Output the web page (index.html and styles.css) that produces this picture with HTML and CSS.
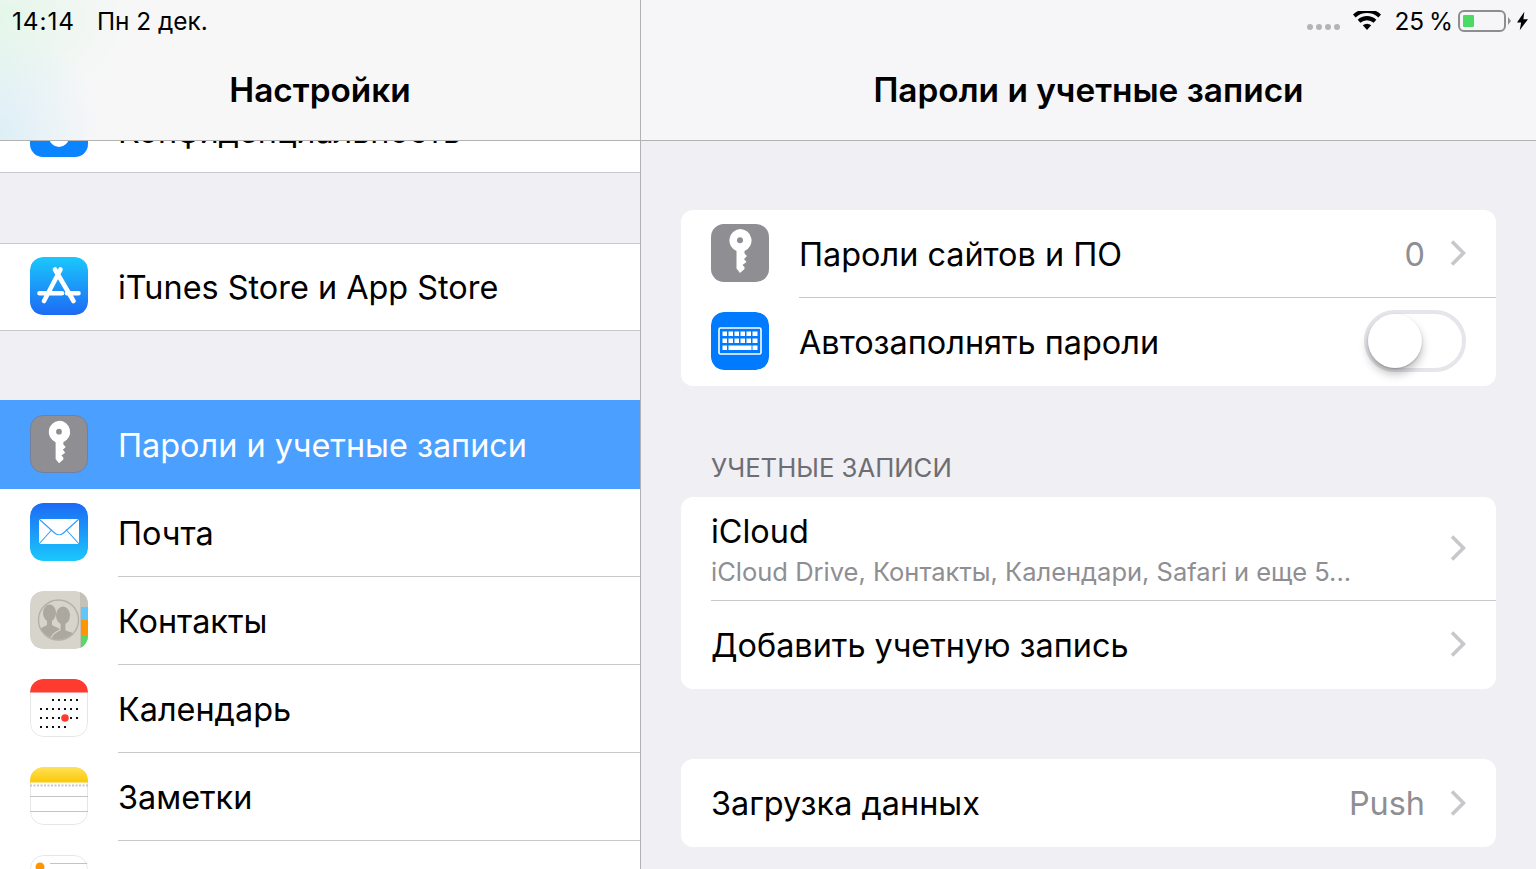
FILE: index.html
```html
<!DOCTYPE html>
<html lang="ru">
<head>
    <meta charset="UTF-8">
    <meta name="viewport" content="width=device-width, initial-scale=1.0">
    <title>Настройки</title>
    <link rel="stylesheet" href="styles.css">
</head>
<body>
    <svg class="defs" width="0" height="0">
        <symbol id="key" viewBox="0 0 58 58">
            <path fill-rule="evenodd" fill="#fff" d="M29 5a11.500 11.500 0 0 1 4.500 22.100V29.500L36 32l-3 3 2.500 3-4 3 2 2v2L29 49l-3.500-4.500V27.100A11.500 11.500 0 0 1 29 5zm0 8.200a3 3 0 1 0 0 6 3 3 0 0 0 0-6z"/>
        </symbol>
        <symbol id="chev" viewBox="0 0 18 28">
            <path d="M4 2.500 15.500 14 4 25.500" fill="none" stroke="#c7c7cc" stroke-width="3.600"/>
        </symbol>
    </svg>

    <aside class="sidebar">
        <header class="navbar navbar-tint">
            <div class="status">
                <span class="status-time">14:14</span>
                <span class="status-date">Пн 2 дек.</span>
            </div>
            <h1>Настройки</h1>
        </header>

        <div class="cut-row">
            <div class="row">
                <span class="icon icon-blue"><i class="hand"></i></span>
                <span class="label">Конфиденциальность</span>
            </div>
        </div>

        <div class="group">
            <div class="row row-short">
                <svg class="icon" viewBox="0 0 58 58">
                    <defs>
                        <linearGradient id="storeBg" x1="0" y1="0" x2="0" y2="1">
                            <stop offset="0" stop-color="#1ac8fc"/>
                            <stop offset="1" stop-color="#1d6af5"/>
                        </linearGradient>
                    </defs>
                    <rect width="58" height="58" rx="13" fill="url(#storeBg)"/>
                    <path d="M30.500 12.500 14 44M25 12.500 43.500 44M9.500 36.300H32M37 36.300H48.500" stroke="#fff" stroke-width="4.600" stroke-linecap="round" fill="none"/>
                </svg>
                <span class="label">iTunes Store и App Store</span>
            </div>
        </div>

        <div class="group group-list">
            <div class="row row-active">
                <svg class="icon icon-gray"><use href="#key"/></svg>
                <span class="label">Пароли и учетные записи</span>
            </div>
            <div class="row row-line">
                <svg class="icon" viewBox="0 0 58 58">
                    <defs>
                        <linearGradient id="mailBg" x1="0" y1="0" x2="0" y2="1">
                            <stop offset="0" stop-color="#1d6af5"/>
                            <stop offset="1" stop-color="#1ac8fc"/>
                        </linearGradient>
                    </defs>
                    <rect width="58" height="58" rx="13" fill="url(#mailBg)"/>
                    <rect x="9" y="16" width="40" height="25" rx="1" fill="#fff"/>
                    <path d="M9 16 24 29.500C27 32.500 31 32.500 34 29.500L49 16M9 41 22 26.500M49 41 36 26.500" stroke="#2f9cf8" stroke-width="1.100" fill="none"/>
                </svg>
                <span class="label">Почта</span>
            </div>
            <div class="row row-line">
                <svg class="icon" viewBox="0 0 58 58">
                    <defs>
                        <clipPath id="peopleClip">
                            <circle cx="28.500" cy="29" r="19.500"/>
                        </clipPath>
                    </defs>
                    <rect width="58" height="58" rx="13" fill="#d7d4cb"/>
                    <path d="M51 0v16h7v-3A13 13 0 0 0 51 0z" fill="#c4c1b8"/>
                    <rect x="51" y="16" width="7" height="13" fill="#62c6fa"/>
                    <rect x="51" y="29" width="7" height="15" fill="#ff9500"/>
                    <path d="M51 44h7v1a13 13 0 0 1-7 13z" fill="#5ad568"/>
                    <circle cx="28.500" cy="29" r="20" fill="none" stroke="#b5b0a7" stroke-width="1.400"/>
                    <g clip-path="url(#peopleClip)" fill="#aca79f">
                        <ellipse cx="19.500" cy="22" rx="6.500" ry="8.500"/>
                        <path d="M6 42C9 37 14 36 17 34V26h5v8C25 36 28 36 31 39L22 50H6z"/>
                        <path d="M20 52C21 43 26 41 30 39V32h6v7C40 41 46 41 50 45V52z" stroke="#d7d4cb" stroke-width="1.200"/>
                        <ellipse cx="33" cy="24.500" rx="7" ry="9"/>
                    </g>
                    <rect x="50" y="0" width="1" height="58" fill="#c4c1b8"/>
                </svg>
                <span class="label">Контакты</span>
            </div>
            <div class="row row-line">
                <svg class="icon" viewBox="0 0 58 58">
                    <rect x=".5" y=".5" width="57" height="57" rx="13" fill="#fff" stroke="#e6e6e6"/>
                    <path d="M0 13.500V13A13 13 0 0 1 13 0h32a13 13 0 0 1 13 13v.5z" fill="#ff3b30"/>
                    <path d="M22 21H48M10 30H48M10 39H48M10 48H36" stroke="#111" stroke-width="2" stroke-dasharray="2 4" fill="none"/>
                    <circle cx="35" cy="39" r="3.800" fill="#ff3b30"/>
                </svg>
                <span class="label">Календарь</span>
            </div>
            <div class="row row-line">
                <svg class="icon" viewBox="0 0 58 58">
                    <defs>
                        <linearGradient id="noteBg" x1="0" y1="0" x2="0" y2="1">
                            <stop offset="0" stop-color="#ffe15b"/>
                            <stop offset="1" stop-color="#fec705"/>
                        </linearGradient>
                    </defs>
                    <rect x=".5" y=".5" width="57" height="57" rx="13" fill="#fff" stroke="#e6e6e6"/>
                    <path d="M0 15.500V13A13 13 0 0 1 13 0h32a13 13 0 0 1 13 13v2.500z" fill="url(#noteBg)"/>
                    <path d="M0 18.500H58" stroke="#c8c8c8" stroke-width="2" stroke-dasharray="2 1.500"/>
                    <path d="M0 29.500H58M0 44.500H58" stroke="#c4c4c4" stroke-width="1"/>
                </svg>
                <span class="label">Заметки</span>
            </div>
            <div class="row">
                <svg class="icon" viewBox="0 0 58 58">
                    <rect x=".5" y=".5" width="57" height="57" rx="13" fill="#fff" stroke="#e6e6e6"/>
                    <path d="M20 8.500H58" stroke="#c4c4c4"/>
                    <circle cx="10" cy="12" r="4.500" fill="#ff9500"/>
                </svg>
            </div>
        </div>
    </aside>

    <main class="detail">
        <header class="navbar">
            <div class="status status-right">
                <span class="dots"><i></i><i></i><i></i><i></i></span>
                <svg class="wifi" viewBox="0 0 28 20">
                    <path d="M14 19 9.800 14.300a6.200 6.200 0 0 1 8.400 0zM7.400 11.700 4.700 8.700a13.800 13.800 0 0 1 18.600 0l-2.700 3a9.800 9.800 0 0 0-13.200 0zM2.600 6.400 0 3.500a20.600 20.600 0 0 1 28 0l-2.600 2.900a16.800 16.800 0 0 0-22.800 0z" fill="#000"/>
                </svg>
                <span class="battery-pct">25 %</span>
                <span class="battery"><i></i></span>
                <span class="battery-tip"></span>
                <svg class="bolt" viewBox="0 0 12 20">
                    <path d="M8 0 0 11.500h4.500L3 20l9-12H7z" fill="#000"/>
                </svg>
            </div>
            <h1>Пароли и учетные записи</h1>
        </header>

        <div class="content">
            <section class="card">
                <div class="card-row">
                    <svg class="icon icon-gray-flat"><use href="#key"/></svg>
                    <div class="cell cell-line">
                        <span class="label">Пароли сайтов и ПО</span>
                        <span class="value">0</span>
                        <svg class="chev"><use href="#chev"/></svg>
                    </div>
                </div>
                <div class="card-row">
                    <svg class="icon" viewBox="0 0 58 58">
                        <rect width="58" height="58" rx="13" fill="#007aff"/>
                        <rect x="8" y="16" width="42" height="26" rx="1.500" fill="none" stroke="#fff" stroke-width="1.600"/>
                        <g fill="#fff">
                            <path d="M11.500 19.500h4.500v4.500h-4.500zM17.500 19.500h4.500v4.500h-4.500zM23.500 19.500h4.500v4.500h-4.500zM29.500 19.500h4.500v4.500h-4.500zM35.500 19.500h4.500v4.500h-4.500zM41.500 19.500h5v4.500h-5z"/>
                            <path d="M11.500 26.500h4.500v4.500h-4.500zM17.500 26.500h4.500v4.500h-4.500zM23.500 26.500h4.500v4.500h-4.500zM29.500 26.500h4.500v4.500h-4.500zM35.500 26.500h4.500v4.500h-4.500zM41.500 26.500h5v4.500h-5z"/>
                            <path d="M11.500 33.500h4.500v4.500h-4.500zM17.500 33.500h23v4.500h-23zM41.500 33.500h5v4.500h-5z"/>
                        </g>
                    </svg>
                    <div class="cell">
                        <span class="label">Автозаполнять пароли</span>
                        <span class="toggle"><i></i></span>
                    </div>
                </div>
            </section>

            <h2 class="section-title">УЧЕТНЫЕ ЗАПИСИ</h2>

            <section class="card">
                <div class="card-row card-row-tall">
                    <div class="cell cell-line cell-flush">
                        <div class="stack">
                            <span class="label">iCloud</span>
                            <span class="sublabel">iCloud Drive, Контакты, Календари, Safari и еще 5...</span>
                        </div>
                        <svg class="chev"><use href="#chev"/></svg>
                    </div>
                </div>
                <div class="card-row">
                    <div class="cell cell-flush">
                        <span class="label">Добавить учетную запись</span>
                        <svg class="chev"><use href="#chev"/></svg>
                    </div>
                </div>
            </section>

            <section class="card card-last">
                <div class="card-row">
                    <div class="cell cell-flush">
                        <span class="label">Загрузка данных</span>
                        <span class="value">Push</span>
                        <svg class="chev"><use href="#chev"/></svg>
                    </div>
                </div>
            </section>
        </div>
    </main>
</body>
</html>
```

FILE: styles.css
```css
* {
    box-sizing: border-box;
}

body {
    margin: 0;
    height: 100vh;
    overflow: hidden;
    display: flex;
    background: #efeff4;
    color: #000;
    font-family: Inter, Roboto, sans-serif;
}

.defs {
    display: block;
    width: 0;
    height: 0;
}

/* nav bars */
.navbar {
    height: 141px;
    flex: none;
    background: #f6f6f8;
    border-bottom: 1px solid #b2b2b2;
    padding-top: 9px;
}

.navbar-tint {
    background:
        radial-gradient(circle at 0 130px, rgba(190, 228, 245, 0.45), rgba(190, 228, 245, 0) 100px),
        radial-gradient(ellipse 130px 90px at 0 20px, rgba(205, 245, 215, 0.45), rgba(205, 245, 215, 0) 100%),
        #f7f7f8;
}

.navbar h1 {
    margin: 37px 0 0;
    font-size: 33.4px;
    line-height: 40px;
    font-weight: 600;
    text-align: center;
}

.status {
    display: flex;
    align-items: center;
    height: 24px;
    padding-left: 12px;
    font-size: 24.4px;
    line-height: 24px;
}

.status-time {
    letter-spacing: 0.9px;
}

.status-date {
    margin-left: 22px;
}

.status-right {
    justify-content: flex-end;
    padding: 0 8px 0 0;
}

.dots {
    display: flex;
    gap: 3px;
    margin: 11px 13px 0 0;
}

.dots i {
    width: 6px;
    height: 6px;
    border-radius: 50%;
    background: #b4b4b6;
}

.wifi {
    width: 28px;
    height: 20px;
    margin: 0 13px 0 0;
}

.battery-pct {
    margin-right: 5px;
    word-spacing: -2px;
}

.battery {
    width: 48px;
    height: 22px;
    padding: 3px;
    border: 2px solid #8e8e90;
    border-radius: 6px;
}

.battery i {
    display: block;
    width: 11px;
    height: 100%;
    background: #4cd964;
    border-radius: 1px;
}

.battery-tip {
    width: 0;
    height: 0;
    margin: 0 6px 0 2px;
    border-left: 3px solid #8e8e90;
    border-top: 4px solid transparent;
    border-bottom: 4px solid transparent;
}

.bolt {
    width: 11px;
    height: 20px;
}

/* left column */
.sidebar {
    width: 641px;
    flex: none;
    display: flex;
    flex-direction: column;
    overflow: hidden;
    border-right: 1px solid #b2b2b2;
}

.row {
    height: 88px;
    flex: none;
    display: flex;
    align-items: center;
    gap: 30px;
    padding-left: 30px;
    background: #fff;
    position: relative;
}

.row .icon {
    margin-top: -2px;
}

.row-short {
    height: 86px;
}

.cut-row {
    height: 32px;
    flex: none;
    display: flex;
    align-items: flex-end;
    overflow: hidden;
    background: #fff;
    border-bottom: 1px solid #c8c7cc;
}

.cut-row .row {
    width: 100%;
    margin-bottom: -1px;
}

.cut-row .label {
    margin-top: 3px;
}

.group {
    margin-top: 70px;
    border-top: 1px solid #c8c7cc;
    border-bottom: 1px solid #c8c7cc;
}

.group-list {
    margin-top: 69px;
    border: none;
}

.row-line::after {
    content: "";
    position: absolute;
    left: 118px;
    right: 0;
    bottom: 0;
    border-bottom: 1px solid #c8c7cc;
}

.row-active {
    height: 89px;
    background: #4a9fff;
    color: #fff;
}

.label {
    font-size: 32.4px;
    line-height: 40px;
    padding-top: 2px;
    white-space: nowrap;
}

.icon {
    width: 58px;
    height: 58px;
    flex: none;
    display: block;
    border-radius: 13px;
}

.icon-gray {
    background: #8e8e93;
    border: 1px solid #7280a0;
}

.icon-gray-flat {
    background: #8e8e93;
}

.icon-blue {
    background: #0a84ff;
    position: relative;
}

.hand {
    position: absolute;
    left: 19px;
    top: 24px;
    width: 20px;
    height: 24px;
    border-radius: 0 0 10px 10px;
    background: #fff;
}

/* right column */
.detail {
    flex: 1;
    min-width: 0;
    display: flex;
    flex-direction: column;
}

.content {
    padding: 69px 40px 0 40px;
}

.card {
    background: #fff;
    border-radius: 12px;
}

.card-last {
    margin-top: 70px;
}

.card-row {
    height: 88px;
    display: flex;
    align-items: center;
    padding-left: 30px;
}

.card-row > .icon {
    margin-top: -2px;
}

.card-row-tall {
    height: 104px;
}

.cell {
    flex: 1;
    min-width: 0;
    height: 100%;
    margin-left: 30px;
    display: flex;
    align-items: center;
    padding-right: 30px;
}

.cell-flush {
    margin-left: 0;
}

.cell-line {
    border-bottom: 1px solid #c8c7cc;
}

.cell .label,
.stack {
    margin-right: auto;
}

.stack {
    display: flex;
    flex-direction: column;
}

.stack .label {
    margin-right: 0;
}

.sublabel {
    margin-top: 4px;
    font-size: 25.5px;
    line-height: 32px;
    color: #8e8e93;
    white-space: nowrap;
}

.value {
    font-size: 32.4px;
    line-height: 40px;
    padding-top: 2px;
    color: #8e8e93;
    margin-right: 23px;
}

.chev {
    width: 18px;
    height: 28px;
    flex: none;
}

.cell-line .chev,
.card-row-tall + .card-row .chev {
    margin-top: -2px;
}

.toggle {
    width: 102px;
    height: 62px;
    flex: none;
    margin-top: -2px;
    border: 4px solid #e5e5ea;
    border-radius: 31px;
    position: relative;
}

.toggle i {
    position: absolute;
    left: 0;
    top: 0;
    width: 54px;
    height: 54px;
    border-radius: 50%;
    background: #fff;
    box-shadow: 0 6px 10px rgba(0, 0, 0, 0.25), 0 1px 2px rgba(0, 0, 0, 0.2);
}

.section-title {
    margin: 0;
    padding: 66px 0 13px 30px;
    font-size: 25.7px;
    line-height: 32px;
    font-weight: 400;
    color: #6d6d72;
}
```
